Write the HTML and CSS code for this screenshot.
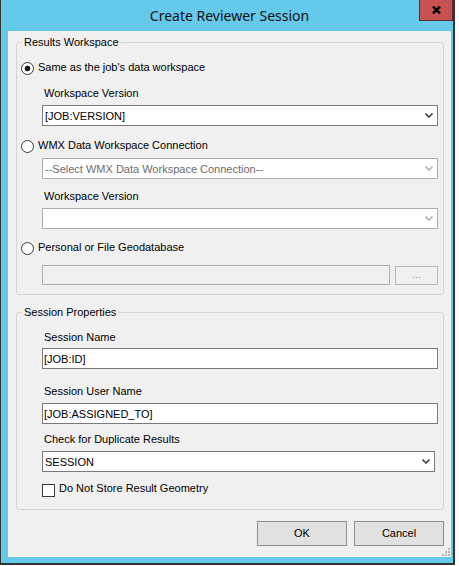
FILE: index.html
```html
<!DOCTYPE html>
<html>
  <head>
    <title>Create Reviewer Session</title>
    <link rel="stylesheet" href="styles.css">
  </head>
  <body>
    <div class="window">
      <div class="titlebar">
        <div class="title">Create Reviewer Session</div>
        <button class="close" title="Close">
          <svg width="9" height="8" viewBox="0 0 9 8">
            <path d="M1 0.6 L8 7.4 M8 0.6 L1 7.4" stroke="#000" stroke-width="2.4" />
          </svg>
        </button>
      </div>

      <div class="client">
        <fieldset class="group results">
          <legend>Results Workspace</legend>

          <label class="option">
            <input type="radio" name="workspace" checked />
            <span>Same as the job's data workspace</span>
          </label>
          <div class="indent">
            <div class="field-label first">Workspace Version</div>
            <div class="combo">
              <span class="value">[JOB:VERSION]</span>
              <svg class="chevron" width="8" height="5" viewBox="0 0 8 5">
                <path d="M0.5 0.5 L4 4 L7.5 0.5" fill="none" stroke="#444" stroke-width="1.6" />
              </svg>
            </div>
          </div>

          <label class="option second">
            <input type="radio" name="workspace" />
            <span>WMX Data Workspace Connection</span>
          </label>
          <div class="indent">
            <div class="combo disabled near">
              <span class="value">--Select WMX Data Workspace Connection--</span>
              <svg class="chevron" width="8" height="5" viewBox="0 0 8 5">
                <path d="M0.5 0.5 L4 4 L7.5 0.5" fill="none" stroke="#b4b4b4" stroke-width="1.6" />
              </svg>
            </div>
            <div class="field-label">Workspace Version</div>
            <div class="combo disabled">
              <span class="value"></span>
              <svg class="chevron" width="8" height="5" viewBox="0 0 8 5">
                <path d="M0.5 0.5 L4 4 L7.5 0.5" fill="none" stroke="#b4b4b4" stroke-width="1.6" />
              </svg>
            </div>
          </div>

          <label class="option third">
            <input type="radio" name="workspace" />
            <span>Personal or File Geodatabase</span>
          </label>
          <div class="indent browse-row">
            <div class="textbox disabled"></div>
            <button class="browse" disabled>...</button>
          </div>
        </fieldset>

        <fieldset class="group session">
          <legend>Session Properties</legend>

          <div class="indent">
            <div class="field-label first">Session Name</div>
            <div class="textbox">[JOB:ID]</div>

            <div class="field-label">Session User Name</div>
            <div class="textbox">[JOB:ASSIGNED_TO]</div>

            <div class="field-label check-label">Check for Duplicate Results</div>
            <div class="combo short">
              <span class="value">SESSION</span>
              <svg class="chevron" width="8" height="5" viewBox="0 0 8 5">
                <path d="M0.5 0.5 L4 4 L7.5 0.5" fill="none" stroke="#444" stroke-width="1.6" />
              </svg>
            </div>

            <label class="checkbox-row">
              <input type="checkbox" />
              <span>Do Not Store Result Geometry</span>
            </label>
          </div>
        </fieldset>

        <div class="buttons">
          <button class="button">OK</button>
          <button class="button">Cancel</button>
        </div>

        <svg class="grip" width="10" height="10" viewBox="0 0 10 10">
          <rect x="8" y="2" width="2" height="2" />
          <rect x="5" y="5" width="2" height="2" />
          <rect x="8" y="5" width="2" height="2" />
          <rect x="2" y="8" width="2" height="2" />
          <rect x="5" y="8" width="2" height="2" />
          <rect x="8" y="8" width="2" height="2" />
        </svg>
      </div>
    </div>
  </body>
</html>
```

FILE: styles.css
```css
body {
  margin: 0;
  background-color: #fff;
  font-family: 'Liberation Sans', Arial, sans-serif;
  font-size: 11px;
  color: #000;
}

.window {
  width: 455px;
  height: 565px;
  box-sizing: border-box;
  background-color: #65c9ea;
  border-left: 1px solid #333;
  border-right: 2px solid #333;
  border-bottom: 2px solid #333;
  display: flex;
  flex-direction: column;
}

/* title bar */

.titlebar {
  height: 31px;
  display: flex;
  flex-shrink: 0;
}

.title {
  flex: 1;
  padding-left: 39px;
  text-align: center;
  font-family: 'Noto Sans', sans-serif;
  font-size: 14px;
  line-height: 31px;
  color: #111;
}

.close {
  width: 34px;
  height: 21px;
  padding: 0;
  margin: 0;
  border: 1px solid #5d2c2c;
  border-top: none;
  background-color: #c75050;
  display: flex;
  align-items: center;
  justify-content: center;
}

.close svg {
  display: block;
}

/* dialog body */

.client {
  position: relative;
  margin-left: 7px;
  width: 443px;
  height: 526px;
  box-sizing: border-box;
  padding: 4px 7px 0 8px;
  background-color: #f0f0f0;
  flex-shrink: 0;
}

.group {
  margin: 0;
  min-width: 0;
  border: 1px solid #d5d5d5;
  border-radius: 3px;
  padding: 11px 5px 9px 4px;
}

.group legend {
  margin-left: 1px;
  padding: 0 2px;
  line-height: 14px;
}

.session {
  margin-top: 10px;
  padding-top: 10px;
  padding-bottom: 12px;
}

.indent {
  padding-left: 21px;
}

.option,
.checkbox-row {
  display: flex;
  align-items: flex-start;
  line-height: 14px;
}

.option input {
  appearance: none;
  width: 13px;
  height: 13px;
  margin: 2px 4px 0 0;
  border: 1px solid #3a3a3a;
  border-radius: 50%;
  background: #fff;
  flex-shrink: 0;
}

.option input:checked {
  background: radial-gradient(circle, #1a1a1a 2.5px, #fff 3.2px);
}

.option.second {
  margin-top: 12px;
}

.option.third {
  margin-top: 11px;
}

.field-label {
  line-height: 15px;
  padding-left: 2px;
  margin-top: 10px;
  margin-bottom: 4px;
}

.field-label.first {
  margin-top: 11px;
}

.session .field-label {
  margin-top: 15px;
}

.session .field-label.first {
  margin-top: 1px;
  margin-bottom: 3px;
}

.session .field-label.check-label {
  margin-top: 8px;
}

/* inputs */

.combo,
.textbox {
  height: 21px;
  box-sizing: border-box;
  border: 1px solid #7a7a7a;
  background-color: #fff;
  display: flex;
  align-items: center;
  white-space: nowrap;
  overflow: hidden;
}

.combo {
  padding: 0 4px 0 2px;
}

.combo.near {
  margin-top: 5px;
}

.combo.short {
  margin-right: 3px;
}

.combo .chevron {
  margin-left: auto;
  flex-shrink: 0;
}

.textbox {
  padding-left: 1px;
}

.combo.disabled {
  border-color: #adadad;
  color: #6d6d6d;
}

.browse-row {
  display: flex;
  gap: 5px;
  margin-top: 10px;
}

.textbox.disabled {
  flex: 1;
  height: 20px;
  border-color: #adadad;
  background-color: #f0f0f0;
}

.browse {
  width: 43px;
  height: 19px;
  margin: 1px 0 0;
  padding: 0 0 3px;
  border: 1px solid #b5b9bb;
  background-color: #f0f0f0;
  color: #a0a0a0;
  font-family: 'Liberation Sans', Arial, sans-serif;
  font-size: 11px;
}

.checkbox-row {
  margin-top: 9px;
}

.checkbox-row input {
  appearance: none;
  width: 13px;
  height: 13px;
  margin: 3px 4px 0 0;
  border: 1px solid #3a3a3a;
  background: #fff;
  flex-shrink: 0;
}

/* footer buttons */

.buttons {
  display: flex;
  justify-content: flex-end;
  gap: 7px;
  margin-top: 11px;
}

.button {
  width: 90px;
  height: 25px;
  margin: 0;
  padding: 0 0 1px;
  border: 1px solid #8f8f8f;
  background-color: #e1e1e1;
  font-family: 'Liberation Sans', Arial, sans-serif;
  font-size: 11px;
  line-height: 14px;
  color: #000;
}

.grip {
  position: absolute;
  right: 1px;
  bottom: 1px;
  fill: #b5b5b5;
}
```
